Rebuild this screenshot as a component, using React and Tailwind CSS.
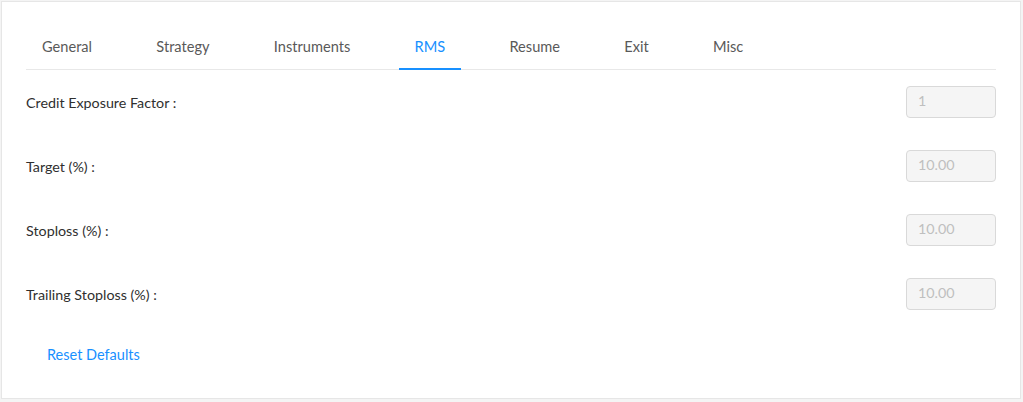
import React, { useState } from 'react';

const tabs = ['General', 'Strategy', 'Instruments', 'RMS', 'Resume', 'Exit', 'Misc'];

const fields = [
  { label: 'Credit Exposure Factor :', value: '1' },
  { label: 'Target (%) :', value: '10.00' },
  { label: 'Stoploss (%) :', value: '10.00' },
  { label: 'Trailing Stoploss (%) :', value: '10.00' },
];

const App = () => {
  const [active, setActive] = useState('RMS');

  return (
    <div className="min-h-[402px] bg-[#f4f4f4] pl-px pt-px font-['Lato',sans-serif]">
      <div className="w-[1020px] h-[398px] bg-white border border-[#e6e6e6] px-6 pt-6">
        {/* Tabs */}
        <div className="flex gap-8 border-b border-[#e8e8e8]">
          {tabs.map((tab) => (
            <button
              key={tab}
              onClick={() => setActive(tab)}
              className={`-mb-px pl-4 pr-[16.3px] py-[11px] text-[14.6px] leading-[20px] border-b-2 ${
                active === tab ? 'border-[#1890ff] text-[#1890ff]' : 'border-transparent text-[#595959]'
              }`}
            >
              {tab}
            </button>
          ))}
        </div>

        {/* Fields */}
        <div className="mt-4 flex flex-col gap-8">
          {fields.map((f) => (
            <div key={f.label} className="flex items-center justify-between h-8">
              <span className="pt-px text-[14.3px] text-[#2f2f2f]">{f.label}</span>
              <input
                disabled
                value={f.value}
                readOnly
                className="w-[90px] h-8 rounded border border-[#d9d9d9] bg-[#f5f5f5] px-[11px] pb-[3px] text-[14.3px] text-[#bfbfbf]"
              />
            </div>
          ))}
        </div>

        <button className="mt-[34px] ml-[21px] text-[14.5px] leading-[22px] text-[#1890ff]">
          Reset Defaults
        </button>
      </div>
    </div>
  );
};

export default App;
